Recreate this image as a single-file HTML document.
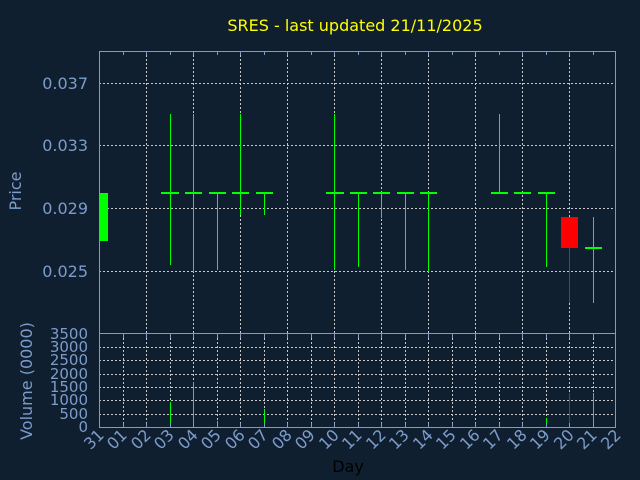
<!DOCTYPE html>
<html><head><style>
html,body{margin:0;padding:0;background:#0f1f30;}
svg{display:block;font-family:"DejaVu Sans","Liberation Sans",sans-serif;}
</style></head><body>
<svg width="640" height="480" viewBox="0 0 640 480" xmlns="http://www.w3.org/2000/svg">
<rect width="640" height="480" fill="#0f1f30"/>
<text x="355" y="31" fill="#ffff00" font-size="16" text-anchor="middle">SRES - last updated 21/11/2025</text>
<g stroke="#c8c8c8" stroke-width="1" stroke-dasharray="2,2" shape-rendering="crispEdges">
<line x1="99" y1="83.5" x2="616" y2="83.5"/>
<line x1="99" y1="145.5" x2="616" y2="145.5"/>
<line x1="99" y1="208.5" x2="616" y2="208.5"/>
<line x1="99" y1="271.5" x2="616" y2="271.5"/>
<line x1="146.5" y1="51" x2="146.5" y2="333"/><line x1="193.5" y1="51" x2="193.5" y2="333"/>
<line x1="240.5" y1="51" x2="240.5" y2="333"/><line x1="287.5" y1="51" x2="287.5" y2="333"/>
<line x1="334.5" y1="51" x2="334.5" y2="333"/><line x1="381.5" y1="51" x2="381.5" y2="333"/>
<line x1="428.5" y1="51" x2="428.5" y2="333"/><line x1="475.5" y1="51" x2="475.5" y2="333"/>
<line x1="522.5" y1="51" x2="522.5" y2="333"/><line x1="569.5" y1="51" x2="569.5" y2="333"/>
<line x1="99" y1="347.5" x2="616" y2="347.5"/><line x1="99" y1="360.5" x2="616" y2="360.5"/>
<line x1="99" y1="374.5" x2="616" y2="374.5"/><line x1="99" y1="387.5" x2="616" y2="387.5"/>
<line x1="99" y1="400.5" x2="616" y2="400.5"/><line x1="99" y1="414.5" x2="616" y2="414.5"/>
<line x1="123.5" y1="334" x2="123.5" y2="427"/><line x1="146.5" y1="334" x2="146.5" y2="427"/>
<line x1="170.5" y1="334" x2="170.5" y2="427"/><line x1="193.5" y1="334" x2="193.5" y2="427"/>
<line x1="217.5" y1="334" x2="217.5" y2="427"/><line x1="240.5" y1="334" x2="240.5" y2="427"/>
<line x1="264.5" y1="334" x2="264.5" y2="427"/><line x1="287.5" y1="334" x2="287.5" y2="427"/>
<line x1="311.5" y1="334" x2="311.5" y2="427"/><line x1="334.5" y1="334" x2="334.5" y2="427"/>
<line x1="358.5" y1="334" x2="358.5" y2="427"/><line x1="381.5" y1="334" x2="381.5" y2="427"/>
<line x1="405.5" y1="334" x2="405.5" y2="427"/><line x1="428.5" y1="334" x2="428.5" y2="427"/>
<line x1="452.5" y1="334" x2="452.5" y2="427"/><line x1="475.5" y1="334" x2="475.5" y2="427"/>
<line x1="499.5" y1="334" x2="499.5" y2="427"/><line x1="522.5" y1="334" x2="522.5" y2="427"/>
<line x1="546.5" y1="334" x2="546.5" y2="427"/><line x1="569.5" y1="334" x2="569.5" y2="427"/>
<line x1="593.5" y1="334" x2="593.5" y2="427"/>
</g>
<!-- candles -->
<g fill="#00ff00" shape-rendering="crispEdges">
<rect x="170" y="114" width="1" height="151"/>
<rect x="193" y="114" width="1" height="158"/>
<rect x="217" y="193" width="1" height="77"/>
<rect x="240" y="114" width="1" height="101"/>
<rect x="264" y="193" width="1" height="22"/>
<rect x="334" y="114" width="1" height="156"/>
<rect x="358" y="193" width="1" height="74"/>
<rect x="381" y="193" width="1" height="25"/>
<rect x="405" y="193" width="1" height="77"/>
<rect x="428" y="193" width="1" height="79"/>
<rect x="499" y="114" width="1" height="79"/>
<rect x="546" y="193" width="1" height="74"/>
<rect x="593" y="217" width="1" height="86"/>
<rect x="99" y="193" width="9" height="48"/>
<rect x="161" y="192" width="18" height="2"/><rect x="185" y="192" width="17" height="2"/>
<rect x="209" y="192" width="17" height="2"/><rect x="232" y="192" width="17" height="2"/>
<rect x="256" y="192" width="17" height="2"/><rect x="326" y="192" width="18" height="2"/>
<rect x="350" y="192" width="17" height="2"/><rect x="373" y="192" width="17" height="2"/>
<rect x="397" y="192" width="17" height="2"/><rect x="420" y="192" width="17" height="2"/>
<rect x="491" y="192" width="17" height="2"/><rect x="514" y="192" width="17" height="2"/>
<rect x="538" y="192" width="17" height="2"/><rect x="585" y="247" width="17" height="2"/>
<!-- volume -->
<rect x="170" y="402" width="1" height="25"/>
<rect x="193" y="382" width="1" height="45"/>
<rect x="217" y="421" width="1" height="6"/>
<rect x="264" y="409" width="1" height="18"/>
<rect x="381" y="424" width="1" height="3"/>
<rect x="405" y="423" width="1" height="4"/>
<rect x="546" y="418" width="1" height="9"/>
<rect x="593" y="393" width="1" height="34"/>
</g>
<g fill="#ff0000" shape-rendering="crispEdges">
<rect x="569" y="248" width="1" height="55"/>
<rect x="561" y="217" width="17" height="31"/>
<rect x="569" y="393" width="1" height="34"/>
</g>
<!-- frames -->
<g fill="none" stroke="#7d9ccb" stroke-width="1" shape-rendering="crispEdges">
<rect x="99.5" y="51.5" width="516" height="376"/>
<line x1="99" y1="333.5" x2="616" y2="333.5"/>
<path d="M123.5 51v4M146.5 51v4M170.5 51v4M193.5 51v4M217.5 51v4M240.5 51v4M264.5 51v4M287.5 51v4M311.5 51v4M334.5 51v4M358.5 51v4M381.5 51v4M405.5 51v4M428.5 51v4M452.5 51v4M475.5 51v4M499.5 51v4M522.5 51v4M546.5 51v4M569.5 51v4M593.5 51v4"/>
<path d="M123.5 334v4M146.5 334v4M170.5 334v4M193.5 334v4M217.5 334v4M240.5 334v4M264.5 334v4M287.5 334v4M311.5 334v4M334.5 334v4M358.5 334v4M381.5 334v4M405.5 334v4M428.5 334v4M452.5 334v4M475.5 334v4M499.5 334v4M522.5 334v4M546.5 334v4M569.5 334v4M593.5 334v4"/>
<path d="M123.5 427v-4M146.5 427v-4M170.5 427v-4M193.5 427v-4M217.5 427v-4M240.5 427v-4M264.5 427v-4M287.5 427v-4M311.5 427v-4M334.5 427v-4M358.5 427v-4M381.5 427v-4M405.5 427v-4M428.5 427v-4M452.5 427v-4M475.5 427v-4M499.5 427v-4M522.5 427v-4M546.5 427v-4M569.5 427v-4M593.5 427v-4"/>
</g>
<g fill="#7d9ccb" font-size="16" text-anchor="end">
<text x="88" y="89">0.037</text>
<text x="88" y="151">0.033</text>
<text x="88" y="214">0.029</text>
<text x="88" y="277">0.025</text>
<g font-size="15">
<text x="88" y="339">3500</text><text x="88" y="352">3000</text><text x="88" y="365">2500</text>
<text x="88" y="379">2000</text><text x="88" y="392">1500</text><text x="88" y="405">1000</text>
<text x="88" y="419">500</text><text x="88" y="432">0</text>
</g>
</g>
<text transform="translate(21,191) rotate(-90)" fill="#7d9ccb" font-size="16" text-anchor="middle">Price</text>
<text transform="translate(32,381) rotate(-90)" fill="#7d9ccb" font-size="16" text-anchor="middle">Volume (0000)</text>
<g fill="#7d9ccb" font-size="16" text-anchor="end">
<text transform="translate(105,436) rotate(-45)">31</text>
<text transform="translate(128,436) rotate(-45)">01</text>
<text transform="translate(152,436) rotate(-45)">02</text>
<text transform="translate(175,436) rotate(-45)">03</text>
<text transform="translate(199,436) rotate(-45)">04</text>
<text transform="translate(222,436) rotate(-45)">05</text>
<text transform="translate(246,436) rotate(-45)">06</text>
<text transform="translate(269,436) rotate(-45)">07</text>
<text transform="translate(293,436) rotate(-45)">08</text>
<text transform="translate(316,436) rotate(-45)">09</text>
<text transform="translate(340,436) rotate(-45)">10</text>
<text transform="translate(363,436) rotate(-45)">11</text>
<text transform="translate(387,436) rotate(-45)">12</text>
<text transform="translate(410,436) rotate(-45)">13</text>
<text transform="translate(434,436) rotate(-45)">14</text>
<text transform="translate(457,436) rotate(-45)">15</text>
<text transform="translate(481,436) rotate(-45)">16</text>
<text transform="translate(504,436) rotate(-45)">17</text>
<text transform="translate(528,436) rotate(-45)">18</text>
<text transform="translate(551,436) rotate(-45)">19</text>
<text transform="translate(575,436) rotate(-45)">20</text>
<text transform="translate(598,436) rotate(-45)">21</text>
<text transform="translate(622,436) rotate(-45)">22</text>
</g>
<text x="348" y="472" fill="#000000" font-size="16" text-anchor="middle">Day</text>
</svg>
</body></html>
